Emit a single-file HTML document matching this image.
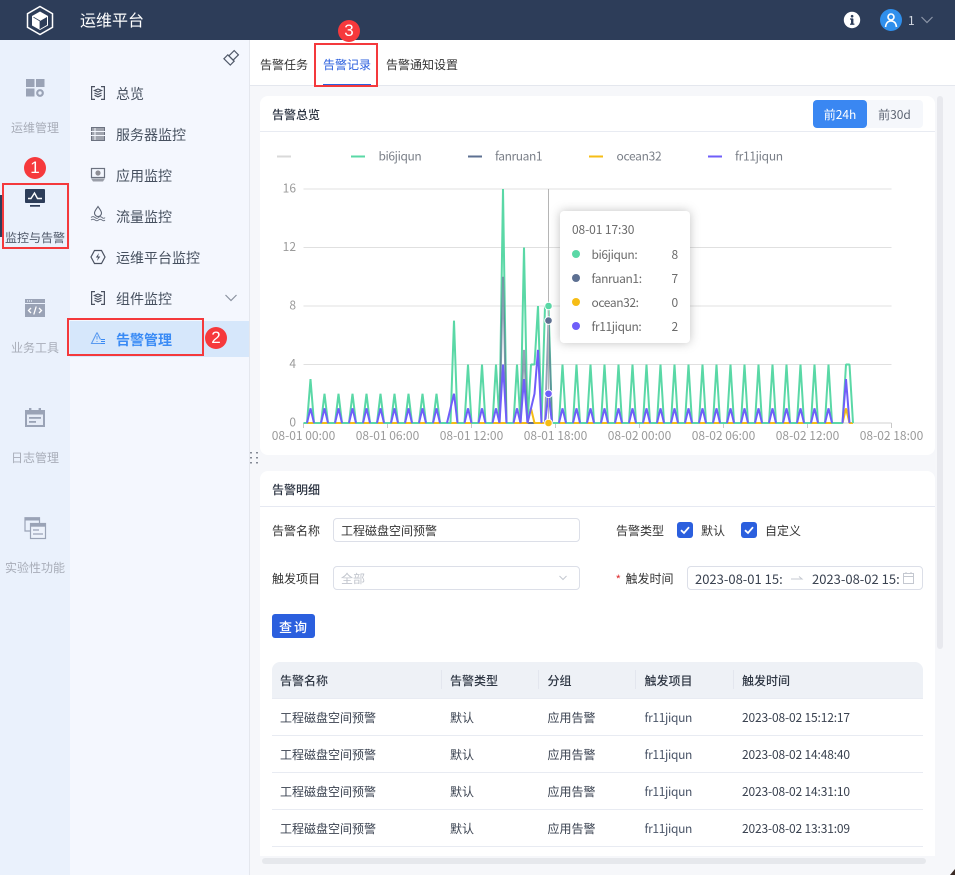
<!DOCTYPE html>
<html lang="zh">
<head>
<meta charset="utf-8">
<title>运维平台</title>
<style>
html,body{margin:0;padding:0;width:955px;height:875px;overflow:hidden}
body{position:relative;background:#f6f7fa;font-family:"Noto Sans CJK SC","Liberation Sans",sans-serif;font-size:12px;color:#333}
.a{position:absolute;white-space:nowrap}
.t{position:absolute;white-space:nowrap;line-height:18px;height:18px;margin-top:1px}
svg{position:absolute;overflow:visible}
svg text{font-family:"Noto Sans CJK SC","Liberation Sans",sans-serif}
.rl{position:absolute;left:0;width:70px;text-align:center;color:#a8adb8;line-height:18px;font-size:12px;margin-top:1px}
.sm{position:absolute;left:116px;font-size:14px;line-height:20px;color:#46505f;white-space:nowrap;margin-top:1px}
.box{position:absolute;box-sizing:border-box;border:2px solid #f4393c}
.num{position:absolute;width:22px;height:22px;border-radius:50%;background:#f6393c;color:#fff;text-align:center;line-height:22px;font-size:17px;font-family:"Liberation Sans",sans-serif}
.input{position:absolute;box-sizing:border-box;background:#fff;border:1px solid #dcdfe8;border-radius:4px}
.ck{position:absolute;width:16px;height:16px;border-radius:3px;background:#2b5fde}
.hr{position:absolute;height:1px;background:#e8ebf2;left:272px;width:651px}
.div{position:absolute;top:670px;width:1px;height:19px;background:#e3e6ee}
.th{position:absolute;top:671px;line-height:18px;font-weight:500;color:#2f3744;margin-top:1px}
.td{position:absolute;line-height:18px;color:#3a4250;white-space:nowrap;margin-top:1px}
.fr{left:644.5px;color:#4a5568;letter-spacing:-.33px}
.dt{left:742px;letter-spacing:-.16px}
.tt{color:#6b6b6b;left:591.5px;letter-spacing:-.4px}
.tv{color:#6b6b6b;left:671.5px}
</style>
</head>
<body>
<!-- header -->
<div class="a" style="left:0;top:0;width:955px;height:40px;background:#2d3d59"></div>
<svg style="left:0;top:0" width="80" height="40" viewBox="0 0 80 40">
<path d="M40 6.500 L52.500 13.700 V27.300 L40 34.500 L27.500 27.300 V13.700Z" fill="none" stroke="#fff" stroke-width="1.500"/>
<path d="M40 11.500 L48 16 V25.500 L40 30 L32 25.500 V16Z" fill="#fff"/>
<path d="M40 21 L47 17 V25 L40 29Z" fill="#2d3d59"/>
<path d="M40 21 L33.500 17.200 M40 21 V29" stroke="#2d3d59" stroke-width=".8" fill="none"/>
</svg>
<div class="a" style="left:80px;top:8px;font-size:16px;line-height:22px;color:#fff">运维平台</div>
<svg style="left:842px;top:10px" width="20" height="20" viewBox="0 0 20 20">
<circle cx="10" cy="10" r="8.200" fill="#fff"/>
<rect x="9" y="9" width="2.400" height="5.600" fill="#2d3d59"/><rect x="8" y="13.600" width="4.400" height="1.200" fill="#2d3d59"/><rect x="8" y="8.400" width="3.200" height="1.200" fill="#2d3d59"/><circle cx="10.100" cy="6.200" r="1.300" fill="#2d3d59"/>
</svg>
<svg style="left:880px;top:9px" width="22" height="22" viewBox="0 0 22 22">
<circle cx="11" cy="11" r="11" fill="#2f8fec"/>
<circle cx="11" cy="8" r="3" fill="none" stroke="#fff" stroke-width="1.600"/>
<path d="M5.500 18 C6 13.500 8 12 11 12 C14 12 16 13.500 16.500 18" fill="none" stroke="#fff" stroke-width="1.600"/>
</svg>
<div class="a" style="left:908px;top:12px;line-height:18px;color:#d5dae3">1</div>
<svg style="left:920px;top:14px" width="14" height="12" viewBox="0 0 14 12"><path d="M1.500 3 L7 8.500 L12.500 3" fill="none" stroke="#8c96a8" stroke-width="1.200"/></svg>

<!-- rail -->
<div class="a" style="left:0;top:40px;width:70px;height:835px;background:#eaf1fc"></div>
<div class="a" style="left:70px;top:40px;width:179px;height:835px;background:#f4f7fe"></div>
<div class="a" style="left:249px;top:40px;width:1px;height:835px;background:#e4e7ee"></div>
<div class="a" style="left:0;top:195px;width:2px;height:42px;background:#2d3d59"></div>

<svg style="left:0;top:70px" width="70" height="480" viewBox="0 70 70 480">
<g fill="#9aa3b6"><rect x="26" y="79" width="8.500" height="8"/><rect x="36" y="79" width="8.500" height="8"/><rect x="26" y="88.500" width="8.500" height="8"/>
<circle cx="40" cy="93" r="2.800" fill="none" stroke="#9aa3b6" stroke-width="2.200"/></g>
<rect x="25" y="189" width="20" height="14" rx="1" fill="#2d3d59"/>
<path d="M28 198.500 H31 L34.500 193 L37.500 198.500 H42" fill="none" stroke="#fff" stroke-width="1.400"/>
<rect x="30" y="205" width="10" height="1.700" fill="#2d3d59"/>
<rect x="25" y="299" width="20" height="18" fill="#9aa3b6"/>
<rect x="25" y="303" width="20" height="1" fill="#eaf1fc"/>
<path d="M27 301h1M29 301h1M31 301h1" stroke="#eaf1fc" stroke-width="1.200"/>
<path d="M31 308 L28.500 310.500 L31 313 M39 308 L41.500 310.500 L39 313 M36.200 306.500 L33.800 314.500" fill="none" stroke="#fff" stroke-width="1.300"/>
<rect x="26" y="411" width="18" height="15" fill="#e6ecf7" stroke="#9aa3b6" stroke-width="2"/>
<rect x="26" y="410" width="18" height="4.500" fill="#9aa3b6"/>
<rect x="29" y="408" width="2.400" height="4" fill="#9aa3b6"/><rect x="38.600" y="408" width="2.400" height="4" fill="#9aa3b6"/>
<rect x="29" y="417" width="12" height="1.800" fill="#9aa3b6"/><rect x="29" y="421" width="7" height="1.800" fill="#9aa3b6"/>
<path d="M30 531 H25 V517.700 H39.500 V523" fill="none" stroke="#9aa3b6" stroke-width="1.200"/>
<rect x="25" y="517.500" width="15" height="3" fill="#9aa3b6"/>
<rect x="30.500" y="523.500" width="15" height="15" fill="#edf2fb" stroke="#9aa3b6" stroke-width="1.200"/>
<rect x="30.500" y="523.500" width="15" height="3.200" fill="#9aa3b6"/>
<path d="M33 530h6M33 534h10" stroke="#9aa3b6" stroke-width="1.200"/>
</svg>

<div class="rl" style="top:118px">运维管理</div>
<div class="rl" style="top:228px;color:#4e5768">监控与告警</div>
<div class="rl" style="top:338px">业务工具</div>
<div class="rl" style="top:448px">日志管理</div>
<div class="rl" style="top:558px">实验性功能</div>

<!-- submenu -->
<div class="a" style="left:70px;top:321px;width:179px;height:36px;background:#d6e7fb"></div>
<svg style="left:70px;top:40px" width="180" height="320" viewBox="70 40 180 320">
<g transform="rotate(45 231 58)" fill="none" stroke="#4f5868" stroke-width="1.200"><rect x="228" y="50.500" width="6" height="7.500"/><rect x="226.500" y="58" width="9" height="5.500"/></g>
<g fill="none" stroke="#4b5261" stroke-width="1.200">
<path d="M95 86.600 H91.600 V99.400 H95 M101 86.600 H104.400 V99.400 H101"/>
<path d="M94.500 90.500 L98 89 L101.500 90.500 L98 92Z M94.500 93 L98 94.500 L101.500 93 M94.500 95.300 L98 96.800 L101.500 95.300"/>
</g>
<rect x="91.500" y="127.500" width="13" height="13" fill="#a0a4ae" stroke="#6c7280"/>
<path d="M91 131.500H105M91 135.500H105" stroke="#f4f7fe" stroke-width="1"/><path d="M95 128V140" stroke="#f4f7fe" stroke-width="1"/>
<rect x="91.500" y="168.500" width="13" height="9" fill="#f4f7fe" stroke="#6c7280" stroke-width="1.200"/>
<path d="M91 178.500 H105 L103 181.500 H93Z" fill="#9a9ea8"/>
<circle cx="98" cy="173" r="2.600" fill="#8f8f96"/>
<path d="M98 206.500 C96 209.500 94.500 211 94.500 213 A3.500 3.500 0 0 0 101.500 213 C101.500 211 100 209.500 98 206.500Z" fill="none" stroke="#5a6272" stroke-width="1.100"/>
<path d="M91 217.500 Q93 215.800 95 217.500 T98.500 217.500 T102 217.500 T105 217.500 M91 220 Q93 218.500 95 220 T98.500 220 T102 220 T105 220" fill="none" stroke="#6a7282" stroke-width=".9"/>
<path d="M94.500 250.500 H101.500 L105 257 L101.500 263.500 H94.500 L91 257Z" fill="none" stroke="#4b5261" stroke-width="1.200"/>
<path d="M99 253 L95.800 257.500 H98 L97 261 L100.300 256.500 H98Z" fill="#4b5261"/>
<g fill="none" stroke="#4b5261" stroke-width="1.200">
<path d="M95 291.600 H91.600 V304.400 H95 M101 291.600 H104.400 V304.400 H101"/>
<path d="M94.500 295.500 L98 294 L101.500 295.500 L98 297Z M94.500 298 L98 299.500 L101.500 298 M94.500 300.300 L98 301.800 L101.500 300.300"/>
</g>
<path d="M225.500 295 L231 300.500 L236.500 295" fill="none" stroke="#8a92a0" stroke-width="1.200"/>
<path d="M97 332.500 L91.500 343.500 H101 M97 332.500 L100.500 339.500" fill="none" stroke="#5b9bf0" stroke-width="1.100"/>
<path d="M97 336v3.500M97 341v1" stroke="#5b9bf0" stroke-width="1"/>
<path d="M101 339.500h4M101 341.500h4M101 343.500h4" stroke="#3a8bf5" stroke-width="1"/>
</svg>
<div class="sm" style="top:83px">总览</div>
<div class="sm" style="top:124px">服务器监控</div>
<div class="sm" style="top:165px">应用监控</div>
<div class="sm" style="top:206px">流量监控</div>
<div class="sm" style="top:247px">运维平台监控</div>
<div class="sm" style="top:288px">组件监控</div>
<div class="sm" style="top:329px;color:#3a8bf5;font-weight:700">告警管理</div>

<svg style="left:250px;top:451px" width="9" height="14" viewBox="0 0 9 14"><path d="M1 1v1.500M1 6v1.500M1 11v1.500M7 1v1.500M7 6v1.500M7 11v1.500" stroke="#555d6c" stroke-width="1.400"/></svg>

<!-- tabs -->
<div class="a" style="left:250px;top:40px;width:705px;height:45px;background:#fff;border-bottom:1px solid #e4e7ee"></div>
<div class="t" style="left:260px;top:55px;color:#333">告警任务</div>
<div class="t" style="left:323px;top:55px;color:#2b5fde">告警记录</div>
<div class="t" style="left:386px;top:55px;color:#333">告警通知设置</div>
<div class="a" style="left:323px;top:84px;width:48px;height:2px;background:#2b5fde"></div>

<!-- card 1 -->
<div class="a" style="left:260px;top:96px;width:675px;height:359px;background:#fff;border-radius:8px"></div>
<div class="a" style="left:260px;top:131px;width:675px;height:1px;background:#e8ebf2"></div>
<div class="t" style="left:272px;top:105px;font-weight:500;color:#2a3240">告警总览</div>
<div class="a" style="left:813px;top:100px;width:110px;height:28px;background:#f5f7fb;border-radius:4px"></div>
<div class="a" style="left:813px;top:100px;width:54px;height:28px;background:#3a87f2;border-radius:4px;color:#fff;text-align:center;line-height:30px">前24h</div>
<div class="a" style="left:867px;top:100px;width:55px;height:28px;color:#5f6775;text-align:center;line-height:30px">前30d</div>

<svg style="left:0;top:0" width="955" height="875" viewBox="0 0 955 875">
<g stroke-width="2">
<path d="M277 156.500H291" stroke="#d9d9d9"/>
<path d="M351 156.500H365" stroke="#5ad8a6"/>
<path d="M468 156.500H482" stroke="#5d7092"/>
<path d="M589 156.500H603" stroke="#f6bd16"/>
<path d="M708 156.500H722" stroke="#6f5ef9"/>
</g>
<g font-size="12" fill="#7a7f88">
<text x="378.500" y="160.500" letter-spacing="-.4">bi6jiqun</text>
<text x="495" y="160.500" letter-spacing="-.4">fanruan1</text>
<text x="616.500" y="160.500" letter-spacing="-.3">ocean32</text>
<text x="735" y="160.500" letter-spacing="-.3">fr11jiqun</text>
</g>
<g stroke="#e0e0e0" stroke-width="1" fill="none">
<path d="M303.500 189H891.500"/><path d="M303.500 247.500H891.500"/><path d="M303.500 306H891.500"/><path d="M303.500 364.500H891.500"/>
</g>
<path d="M303.500 423H891.500" stroke="#d0d0d0" stroke-width="1"/>
<path d="M303.500 423V428M387.500 423V428M471.500 423V428M555.500 423V428M639.500 423V428M723.500 423V428M807.500 423V428M891.500 423V428" stroke="#c8c8c8" stroke-width="1"/>
<g font-size="12" fill="#9a9a9a" text-anchor="end">
<text x="296" y="192.500">16</text><text x="296" y="251">12</text><text x="296" y="309.500">8</text><text x="296" y="368">4</text><text x="296" y="426.500">0</text>
</g>
<g font-size="12" fill="#9a9a9a" text-anchor="middle">
<text x="303.500" y="440">08-01 00:00</text><text x="387.500" y="440">08-01 06:00</text><text x="471.500" y="440">08-01 12:00</text><text x="555.500" y="440">08-01 18:00</text><text x="639.500" y="440">08-02 00:00</text><text x="723.500" y="440">08-02 06:00</text><text x="807.500" y="440">08-02 12:00</text><text x="891.500" y="440">08-02 18:00</text>
</g>
<g fill="none" stroke-width="2" stroke-linejoin="bevel">
<path d="M520 423H541.500" stroke="#5d7092"/>
<path d="M303.500 423H527.500l3.500-14.625 3.500 14.625H842.500l3.500-14.625 3.500 14.625H853" stroke="#f6bd16"/>
<path stroke="#5ad8a6" d="M303.500 423h3.500l3.500-43.875 3.500 43.875h7l3.500-29.250 3.500 29.250h7l3.500-29.250 3.500 29.250h7l3.500-29.250 3.500 29.250h7l3.500-29.250 3.500 29.250h7l3.500-29.250 3.500 29.250h7l3.500-29.250 3.500 29.250h7l3.500-29.250 3.500 29.250h7l3.500-29.250 3.500 29.250h7l3.500-29.250 3.500 29.250h10.500l3.500-102.375 3.500 102.375h7l3.500-58.500 3.500 58.500h7l3.500-58.500 3.500 58.500h7l3.500-58.500 3.500 58.500l3.500-234 3.500 234h7l3.500-58.500 3.500 58.500l3.500-175.500 3.500 175.500l3.500-58.500h3.500l3.500-58.500 3.500 117l3.500-117h3.500l3.500 117h7l3.500-58.500 3.500 58.500h7l3.500-58.500 3.500 58.500h7l3.500-58.500 3.500 58.500h7l3.500-58.500 3.500 58.500h7l3.500-58.500 3.500 58.500h7l3.500-58.500 3.500 58.500h7l3.500-58.500 3.500 58.500h7l3.500-58.500 3.500 58.500h7l3.500-58.500 3.500 58.500h7l3.500-58.500 3.500 58.500h7l3.500-58.500 3.500 58.500h7l3.500-58.500 3.500 58.500h7l3.500-58.500 3.500 58.500h7l3.500-58.500 3.500 58.500h7l3.500-58.500 3.500 58.500h7l3.500-58.500 3.500 58.500h7l3.500-58.500 3.500 58.500h7l3.500-58.500 3.500 58.500h7l3.500-58.500 3.500 58.500h7l3.500-58.500 3.500 58.500h10.500l3.500-58.500h3.500l3.500 58.500"/>
<path stroke="#5d7092" stroke-opacity=".65" d="M499.500 423l3.500-146.250 3.500 146.250M520.500 423l3.500-73.125 3.500 73.125M545 423l3.500-102.375 3.500 102.375"/>
<path stroke="#6f5ef9" d="M307 423l3.500-14.625 3.500 14.625m7 0l3.500-14.625 3.500 14.625m7 0l3.500-14.625 3.500 14.625m7 0l3.500-14.625 3.500 14.625m7 0l3.500-14.625 3.500 14.625m7 0l3.500-14.625 3.500 14.625m7 0l3.500-14.625 3.500 14.625m7 0l3.500-14.625 3.500 14.625m7 0l3.500-14.625 3.500 14.625m7 0l3.500-14.625 3.500 14.625M447 423l3.500-14.625 3.500-14.625 3.500 29.250M464.500 423l3.500-14.625 3.500 14.625M478.500 423l3.500-14.625 3.500 14.625M492.500 423l3.500-14.625 3.500 14.625M499.500 423l3.500-58.500 3.500 58.500M513.500 423l3.500-14.625 3.500 14.625M520.500 423l3.500-43.875 3.500 43.875l3.500-14.625 3.500-14.625 3.500-43.875 3.500 73.125M545 423l3.500-29.250 3.500 29.250M559 423l3.500-14.625 3.500 14.625m7 0l3.500-14.625 3.500 14.625m7 0l3.500-14.625 3.500 14.625m7 0l3.500-14.625 3.500 14.625m7 0l3.500-14.625 3.500 14.625m7 0l3.500-14.625 3.500 14.625m7 0l3.500-14.625 3.500 14.625m7 0l3.500-14.625 3.500 14.625m7 0l3.500-14.625 3.500 14.625m7 0l3.500-14.625 3.500 14.625m7 0l3.500-14.625 3.500 14.625m7 0l3.500-14.625 3.500 14.625m7 0l3.500-14.625 3.500 14.625m7 0l3.500-14.625 3.500 14.625m7 0l3.500-14.625 3.500 14.625m7 0l3.500-14.625 3.500 14.625m7 0l3.500-14.625 3.500 14.625m7 0l3.500-14.625 3.500 14.625m7 0l3.500-14.625 3.500 14.625m7 0l3.500-14.625 3.500 14.625M842.500 423l3.500-43.875 3.500 43.875"/>
</g>
<path d="M548.500 189V423" stroke="#b5b5b5" stroke-width="1"/>
<g stroke="#fff" stroke-width="1">
<circle cx="548.500" cy="306" r="3.800" fill="#5ad8a6"/>
<circle cx="548.500" cy="320.600" r="3.800" fill="#5d7092"/>
<circle cx="548.500" cy="393.750" r="3.800" fill="#6f5ef9"/>
<circle cx="548.500" cy="423" r="3.800" fill="#f6bd16"/>
</g>
<path d="M955 869V875H950Z" fill="#3a2a24"/>
</svg>

<!-- tooltip -->
<div class="a" style="left:560px;top:211px;width:130px;height:132px;background:#fff;border-radius:4px;box-shadow:0 0 10px rgba(120,120,120,.45)"></div>
<div class="t" style="left:572px;top:220px;color:#6b6b6b;letter-spacing:-.1px">08-01 17:30</div>
<svg style="left:571px;top:249px" width="10" height="82" viewBox="0 0 10 82">
<circle cx="5" cy="5" r="4" fill="#5ad8a6"/><circle cx="5" cy="29" r="4" fill="#5d7092"/><circle cx="5" cy="53" r="4" fill="#f6bd16"/><circle cx="5" cy="77" r="4" fill="#6f5ef9"/>
</svg>
<div class="t tt" style="top:245px">bi6jiqun:</div><div class="t tv" style="top:245px">8</div>
<div class="t tt" style="top:269px">fanruan1:</div><div class="t tv" style="top:269px">7</div>
<div class="t tt" style="top:293px">ocean32:</div><div class="t tv" style="top:293px">0</div>
<div class="t tt" style="top:317px">fr11jiqun:</div><div class="t tv" style="top:317px">2</div>

<!-- scrollbar -->
<div class="a" style="left:937px;top:96px;width:6px;height:553px;background:#e8e9ee;border-radius:3px"></div>

<!-- card 2 -->
<div class="a" style="left:260px;top:471px;width:675px;height:385px;background:#fff;border-radius:8px 8px 0 0"></div>
<div class="a" style="left:260px;top:506px;width:675px;height:1px;background:#e6e9f2"></div>
<div class="t" style="left:272px;top:480px;font-weight:500;color:#2a3240">告警明细</div>

<div class="t" style="left:272px;top:521px">告警名称</div>
<div class="input" style="left:333px;top:518px;width:247px;height:24px"></div>
<div class="t" style="left:341px;top:521px">工程磁盘空间预警</div>
<div class="t" style="left:616px;top:521px">告警类型</div>
<div class="ck" style="left:677px;top:522px"></div>
<div class="ck" style="left:741px;top:522px"></div>
<svg style="left:677px;top:522px" width="80" height="16" viewBox="0 0 80 16"><path d="M4 8.200L7 11 12 5.200M68 8.200L71 11 76 5.200" fill="none" stroke="#fff" stroke-width="1.800"/></svg>
<div class="t" style="left:701px;top:521px">默认</div>
<div class="t" style="left:765px;top:521px">自定义</div>

<div class="t" style="left:272px;top:569px">触发项目</div>
<div class="input" style="left:333px;top:566px;width:247px;height:24px"></div>
<div class="t" style="left:341px;top:569px;color:#c0c4cc">全部</div>
<svg style="left:558px;top:574px" width="10" height="8" viewBox="0 0 10 8"><path d="M1.500 2L5 5.500 8.500 2" fill="none" stroke="#c4c8d0" stroke-width="1"/></svg>
<div class="t" style="left:615.500px;top:570px;color:#e0393c">*</div>
<div class="t" style="left:625.500px;top:569px">触发时间</div>
<div class="input" style="left:687px;top:566px;width:236px;height:24px"></div>
<div class="t" style="left:695px;top:569px;font-size:13px;color:#3a4250">2023-08-01 15:</div>
<svg style="left:790px;top:574px" width="14" height="8" viewBox="0 0 14 8"><path d="M1 5H12L9 2.500" fill="none" stroke="#c4c8d0" stroke-width="1"/></svg>
<div class="t" style="left:812px;top:569px;font-size:13px;color:#3a4250">2023-08-02 15:</div>
<svg style="left:903px;top:572px" width="12" height="12" viewBox="0 0 12 12"><rect x=".5" y="1.500" width="10" height="10" fill="none" stroke="#c4c8d0"/><path d="M.5 4.500H10.500M3 0V2M8 0V2" stroke="#c4c8d0"/></svg>

<div class="a" style="left:272px;top:614px;width:43px;height:24px;background:#2b5fde;border-radius:3px;color:#fff;text-align:center;line-height:26px;letter-spacing:2px;text-indent:1px;font-size:13px;font-weight:500">查询</div>

<!-- table -->
<div class="a" style="left:272px;top:662px;width:651px;height:36px;background:#eef1f6;border-radius:8px 8px 0 0"></div>
<div class="div" style="left:441px"></div><div class="div" style="left:538px"></div><div class="div" style="left:635px"></div><div class="div" style="left:733px"></div>
<div class="th" style="left:280px">告警名称</div>
<div class="th" style="left:450px">告警类型</div>
<div class="th" style="left:547.500px">分组</div>
<div class="th" style="left:644.500px">触发项目</div>
<div class="th" style="left:742px">触发时间</div>
<div class="hr" style="top:698px"></div>
<div class="hr" style="top:735px"></div>
<div class="hr" style="top:772px"></div>
<div class="hr" style="top:809px"></div>
<div class="hr" style="top:846px"></div>

<div class="td" style="left:280px;top:708px">工程磁盘空间预警</div><div class="td" style="left:450px;top:708px">默认</div><div class="td" style="left:547.500px;top:708px">应用告警</div><div class="td fr" style="top:708px">fr11jiqun</div><div class="td dt" style="top:708px">2023-08-02 15:12:17</div>
<div class="td" style="left:280px;top:745px">工程磁盘空间预警</div><div class="td" style="left:450px;top:745px">默认</div><div class="td" style="left:547.500px;top:745px">应用告警</div><div class="td fr" style="top:745px">fr11jiqun</div><div class="td dt" style="top:745px">2023-08-02 14:48:40</div>
<div class="td" style="left:280px;top:782px">工程磁盘空间预警</div><div class="td" style="left:450px;top:782px">默认</div><div class="td" style="left:547.500px;top:782px">应用告警</div><div class="td fr" style="top:782px">fr11jiqun</div><div class="td dt" style="top:782px">2023-08-02 14:31:10</div>
<div class="td" style="left:280px;top:819px">工程磁盘空间预警</div><div class="td" style="left:450px;top:819px">默认</div><div class="td" style="left:547.500px;top:819px">应用告警</div><div class="td fr" style="top:819px">fr11jiqun</div><div class="td dt" style="top:819px">2023-08-02 13:31:09</div>

<div class="a" style="left:262px;top:858px;width:664px;height:6px;background:#e6e8ec;border-radius:3px"></div>

<!-- annotations -->
<div class="box" style="left:2px;top:183px;width:67px;height:66px"></div>
<div class="box" style="left:67px;top:318px;width:137px;height:38px"></div>
<div class="box" style="left:314px;top:43px;width:64px;height:44px"></div>
<div class="num" style="left:24px;top:157px">1</div>
<div class="num" style="left:205px;top:327px">2</div>
<div class="num" style="left:338px;top:20px">3</div>
</body>
</html>
